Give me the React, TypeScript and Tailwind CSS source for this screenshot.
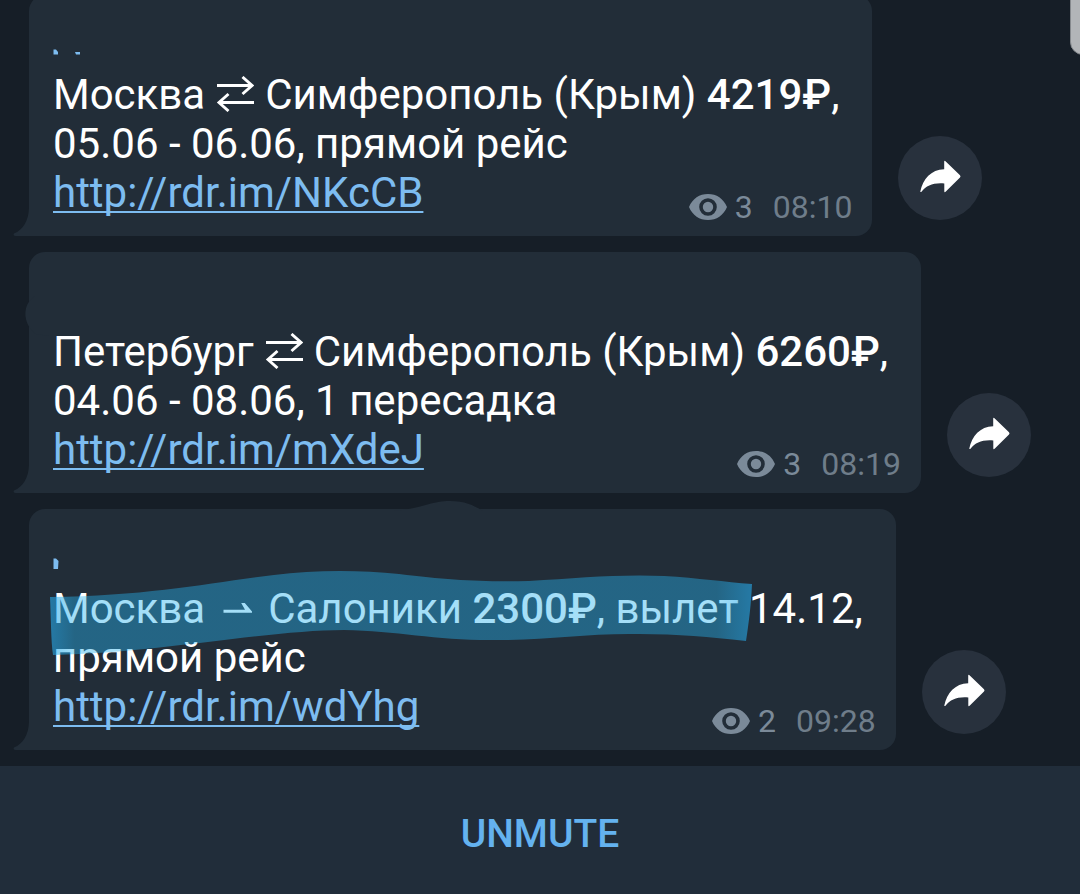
import type { ReactNode } from "react";

const RoundTripArrow = () => (
  <svg role="img" aria-label="туда и обратно" viewBox="0 0 38 36" className="mx-[11px] inline-block h-9 w-[38px] align-[-3px]" fill="none" stroke="currentColor" strokeWidth="2.9">
    <path d="M1 9.5H36M26.500 1L36 9.500L26.500 18M38 26.500H3M12.500 18L3 26.500L12.500 35" />
  </svg>
);

const OneWayArrow = () => (
  <svg role="img" aria-label="в одну сторону" viewBox="0 0 30 14" className="mr-[15px] ml-[18px] inline-block h-[14px] w-[30px] align-[7px]" fill="currentColor">
    <path d="M0.500 7.800H22L18.200 1H21.800L29 9.400V10.800H0.500Z" />
  </svg>
);

const Eye = () => (
  <svg aria-hidden="true" viewBox="0 0 38 26" className="h-[26px] w-[38px]">
    <path fill="currentColor" fillRule="evenodd" d="M19 0C10.500 0 3.500 4.500 0 13C3.500 21.500 10.500 26 19 26S34.500 21.500 38 13C34.500 4.500 27.500 0 19 0ZM19 4.200A8.800 8.800 0 1 1 19 21.800A8.800 8.800 0 1 1 19 4.200ZM19 7.800A5.200 5.200 0 1 0 19 18.200A5.200 5.200 0 1 0 19 7.800Z" />
  </svg>
);

const Tail = () => (
  <svg aria-hidden="true" viewBox="0 0 32 28" className="absolute bottom-0 -left-4 h-7 w-8">
    <path fill="#222d38" d="M16 0C15.500 13 10 22 1 25.500C0 26.500 1 28 2.500 28H32V0Z" />
  </svg>
);

type MessageProps = {
  children: ReactNode;
  link: string;
  views: number;
  time: string;
  overlay?: ReactNode;
};

function Message({ children, link, views, time, overlay }: MessageProps) {
  return (
    <article className="flex items-end gap-[26px]">
      <div className="relative rounded-2xl bg-[#222d38] pt-[75px] pr-[33px] pb-[19px] pl-6">
        <Tail />
        <p className="text-[42px] leading-[49px] text-white">
          {children}
          <br />
          <a href={link} className="text-[#7dbcf0] underline decoration-2 underline-offset-4 [text-decoration-skip-ink:none]">
            {link}
          </a>
        </p>
        <div className="absolute right-5 bottom-[10px] flex items-center gap-2 text-[32px] leading-[38px] text-[#7b8a99]">
          <Eye />
          <span>{views}</span>
          <time className="ml-3 text-[#6f7d8a]">{time}</time>
        </div>
        {overlay}
      </div>
      <button type="button" aria-label="Share" className="mb-4 flex size-[84px] shrink-0 items-center justify-center rounded-full bg-[#28313d]">
        <svg aria-hidden="true" viewBox="0 0 84 84" className="size-[84px]" fill="#fff">
          <path d="M22.300 55.500C25 43 33 33.500 46.200 33.200V25.600Q46.300 24 47.500 25.200L62 39.300Q63 40.500 62 41.600L47.600 55.800Q46.300 56.800 46.300 55.200V47.400C35 46.500 28.500 49.500 23.500 55.700Q22.500 56.500 22.300 55.500Z" />
        </svg>
      </button>
    </article>
  );
}

const marks = "pointer-events-none absolute top-0 left-0 overflow-visible";

export default function App() {
  return (
    <div className="relative flex min-h-screen flex-col overflow-hidden bg-[#161e27] [font-family:Roboto,'Noto_Sans',sans-serif]">
      <div aria-hidden="true" className="absolute -top-4 -right-4 h-[71px] w-[26px] rounded-[14px] border border-[#85898d] bg-[#b2b5b8]" />
      <main className="-mt-[5px] flex flex-col gap-4 pb-4 pl-[29px]">
        <Message
          link="http://rdr.im/NKcCB"
          views={3}
          time="08:10"
          overlay={
            <svg aria-hidden="true" width="500" height="80" className={marks}>
              <path fill="#7dbcf0" d="M24.500 54.500H27L29 57V59.500H24.500ZM46 57H51V59.500H47Z" />
            </svg>
          }
        >
          Москва<RoundTripArrow />Симферополь (Крым) <b className="font-medium">4219₽</b>,<br />
          05.06 - 06.06, прямой рейс
        </Message>
        <Message
          link="http://rdr.im/mXdeJ"
          views={3}
          time="08:19"
          overlay={
            <svg aria-hidden="true" width="500" height="90" className={marks}>
              <path fill="#222d38" d="M6 44C-7 52 -7 72 7 82L20 84H230V44Z" />
            </svg>
          }
        >
          Петербург<RoundTripArrow />Симферополь (Крым) <b className="font-medium">6260₽</b>,<br />
          04.06 - 08.06, 1 пересадка
        </Message>
        <Message
          link="http://rdr.im/wdYhg"
          views={2}
          time="09:28"
          overlay={
            <svg aria-hidden="true" width="730" height="150" className={marks}>
              <defs>
                <linearGradient id="marker">
                  <stop offset="0" stopColor="#27a8e8" stopOpacity=".62" />
                  <stop offset=".035" stopColor="#27b2ee" stopOpacity=".42" />
                  <stop offset=".95" stopColor="#27b2ee" stopOpacity=".42" />
                  <stop offset="1" stopColor="#27a8e8" stopOpacity=".62" />
                </linearGradient>
              </defs>
              <path fill="#222d38" d="M365 2C395 -1 402 -8 421 -8C436 -8 446 -3 454 2Z" />
              <path fill="#7dbcf0" d="M24.500 49.500H27L29.500 52L29 60H24.500Z" />
              <path fill="url(#marker)" d="M21 88C120 87 180 74 245 66C285 61 330 61 370 65C420 71 450 73 500 72C550 69 590 65 635 67C670 69 695 73 723 75C722 96 720 112 717 132C680 128 650 125 610 125C560 124 520 131 470 131C410 132 370 122 315 121C240 121 130 144 24 146C22 132 22 110 21 88Z" />
            </svg>
          }
        >
          Москва<OneWayArrow />Салоники <b className="font-medium">2300₽</b>, вылет 14.12,<br />
          прямой рейс
        </Message>
      </main>
      <footer className="flex flex-1 bg-[#212d3a]">
        <button type="button" className="flex-1 pt-2 text-[39px] leading-[48px] font-medium text-[#64b2ef]">
          UNMUTE
        </button>
      </footer>
    </div>
  );
}
